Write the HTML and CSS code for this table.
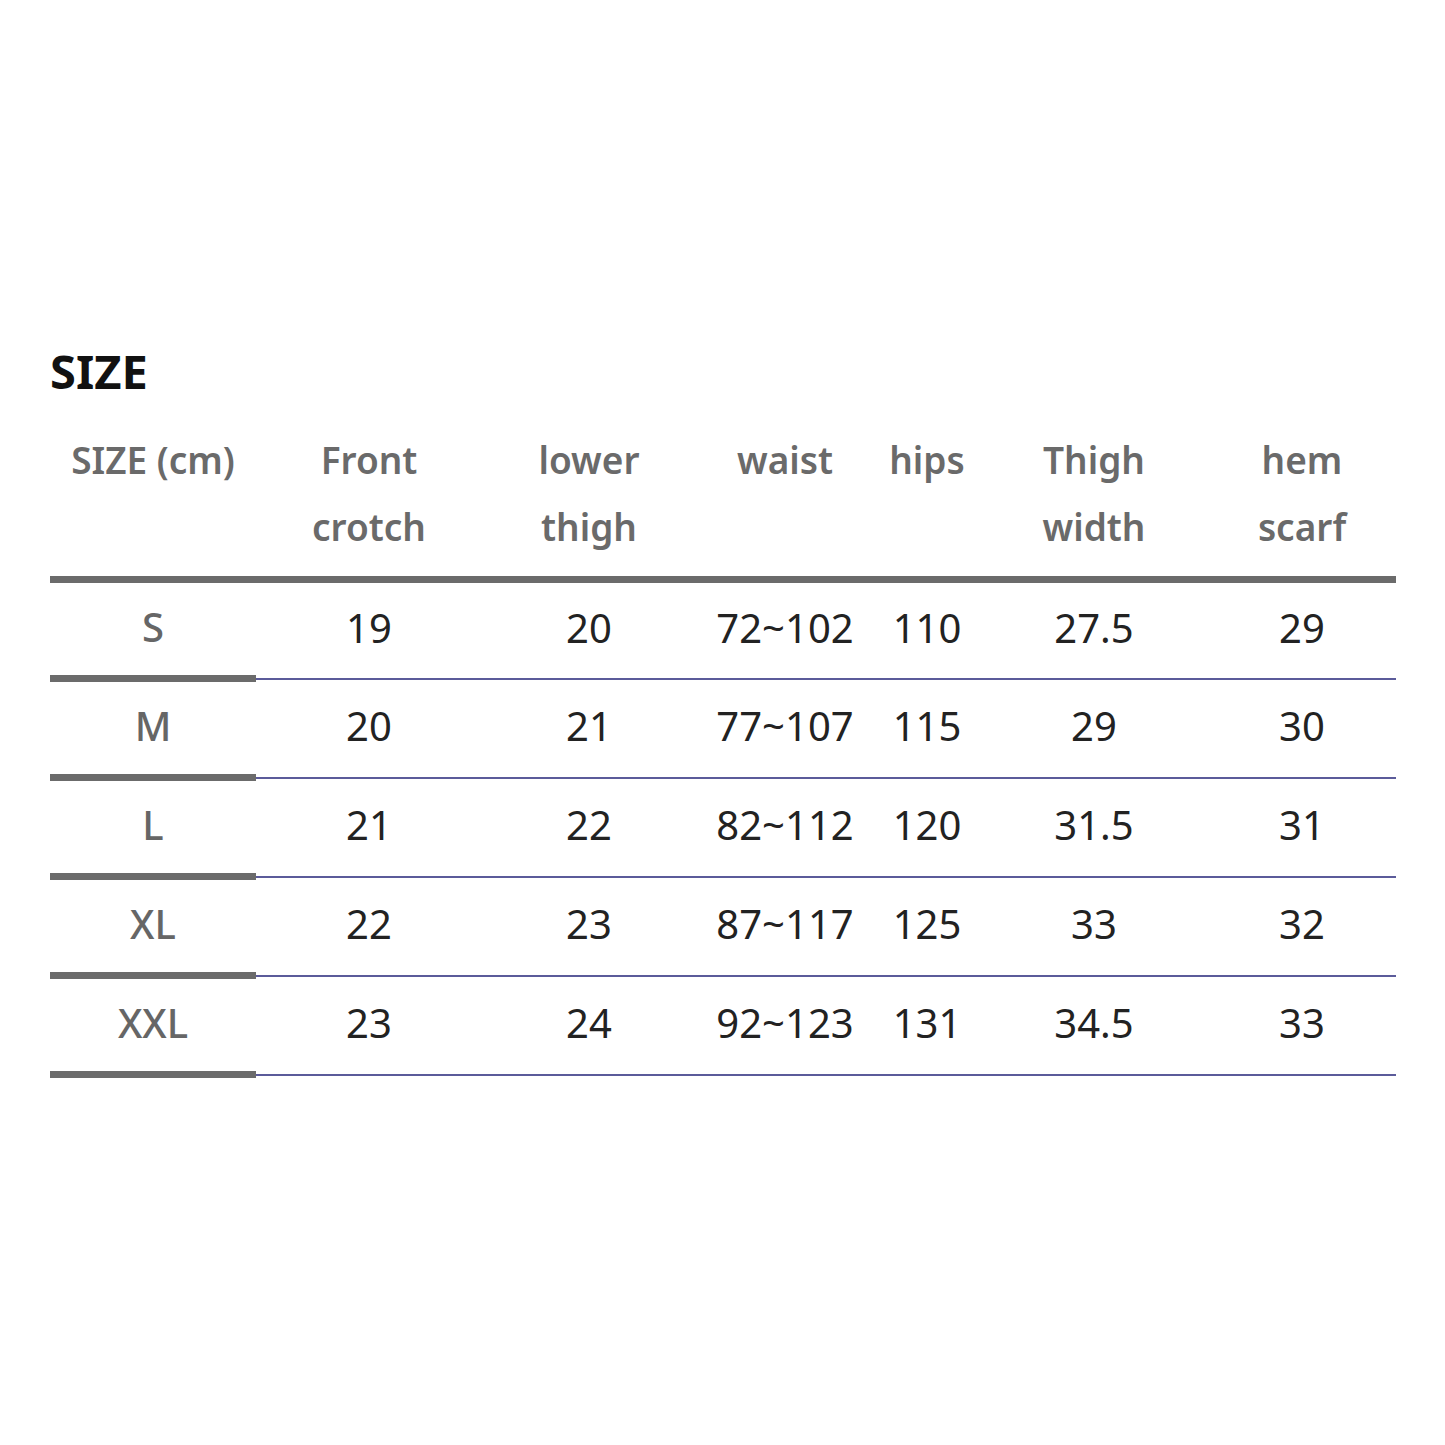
FILE: index.html
```html
<!DOCTYPE html>
<html>
<head>
<meta charset="utf-8">
<link rel="stylesheet" href="styles.css">
</head>
<body>
<div class="page">
  <h2 class="title">SIZE</h2>
  <table class="chart">
    <colgroup>
      <col class="c1"><col class="c2"><col class="c3"><col class="c4"><col class="c5"><col class="c6"><col class="c7">
    </colgroup>
    <thead>
      <tr>
        <th class="first">SIZE (cm)</th>
        <th>Front<br>crotch</th>
        <th>lower<br>thigh</th>
        <th>waist</th>
        <th>hips</th>
        <th>Thigh<br>width</th>
        <th>hem<br>scarf</th>
      </tr>
    </thead>
    <tbody>
      <tr><td class="label">S</td><td>19</td><td>20</td><td>72~102</td><td>110</td><td>27.5</td><td>29</td></tr>
      <tr><td class="label">M</td><td>20</td><td>21</td><td>77~107</td><td>115</td><td>29</td><td>30</td></tr>
      <tr><td class="label">L</td><td>21</td><td>22</td><td>82~112</td><td>120</td><td>31.5</td><td>31</td></tr>
      <tr><td class="label">XL</td><td>22</td><td>23</td><td>87~117</td><td>125</td><td>33</td><td>32</td></tr>
      <tr><td class="label">XXL</td><td>23</td><td>24</td><td>92~123</td><td>131</td><td>34.5</td><td>33</td></tr>
    </tbody>
  </table>
</div>
</body>
</html>
```
FILE: styles.css
```css
html, body {
  margin: 0;
  padding: 0;
  background: #ffffff;
}
.page {
  padding: 343px 0 0 50px;
  font-family: "Noto Sans", "Open Sans", sans-serif;
}
.title {
  margin: 0 0 27px 0;
  font-size: 47px;
  line-height: 56px;
  font-weight: 700;
  color: #111111;
  letter-spacing: 0;
}
.chart {
  width: 1346px;
  border-collapse: collapse;
  table-layout: fixed;
}
.c1 { width: 206px; }
.c2 { width: 226px; }
.c3 { width: 214px; }
.c4 { width: 178px; }
.c5 { width: 106px; }
.c6 { width: 228px; }
.c7 { width: 188px; }
.chart th {
  font-size: 37px;
  font-weight: 600;
  color: #6a6a6a;
  line-height: 67px;
  vertical-align: top;
  text-align: center;
  padding: 0 0 16px 0;
  border-bottom: 7px solid #6b6b6b;
}
.chart td {
  height: 86px;
  padding: 0 0 6px 0;
  text-align: center;
  vertical-align: middle;
  font-size: 40px;
  color: #222222;
  border-bottom: 2px solid #5b5b9a;
}
.chart td.label {
  color: #666666;
  font-weight: 500;
  border-bottom: 7px solid #6b6b6b;
}
```
